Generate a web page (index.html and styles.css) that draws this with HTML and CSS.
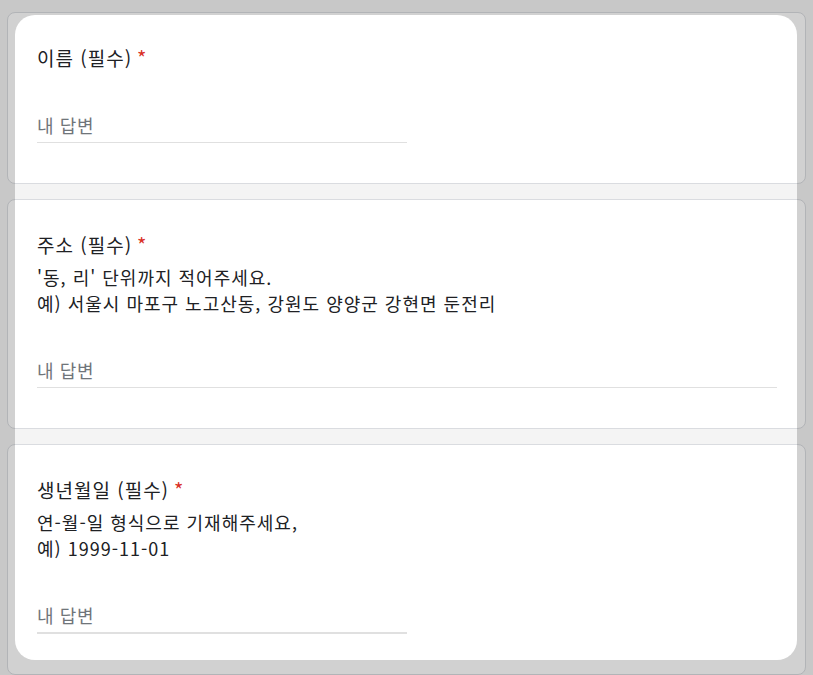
FILE: index.html
```html
<!DOCTYPE html>
<html lang="ko">
<head>
<meta charset="utf-8">
<link rel="stylesheet" href="styles.css">
</head>
<body>
<div class="page">
  <div class="card">
    <div class="title">이름 (필수)<span class="req">*</span></div>
    <div class="answer half"><span class="ph">내 답변</span></div>
  </div>
  <div class="card">
    <div class="title">주소 (필수)<span class="req">*</span></div>
    <div class="desc">'동, 리' 단위까지 적어주세요.<br>예) 서울시 마포구 노고산동, 강원도 양양군 강현면 둔전리</div>
    <div class="answer"><span class="ph">내 답변</span></div>
  </div>
  <div class="card">
    <div class="title">생년월일 (필수)<span class="req">*</span></div>
    <div class="desc">연-월-일 형식으로 기재해주세요,<br>예) 1999-11-01</div>
    <div class="answer half thick"><span class="ph">내 답변</span></div>
  </div>
</div>
<div class="spotlight"></div>
</body>
</html>
```

FILE: styles.css
```css
html, body {
  margin: 0;
  padding: 0;
  background: #f4f4f4;
  overflow: hidden;
  height: 675px;
}
body {
  font-family: "Noto Sans CJK KR", "Noto Sans", sans-serif;
  color: #202124;
}
.page {
  padding: 12px 0 0 7px;
  width: 799px;
}
.card {
  background: #fff;
  border: 1px solid #dadce0;
  border-radius: 8px;
  padding: 32px 28px 40px 29px;
  margin-bottom: 15px;
}
.title {
  font-size: 19px;
  line-height: 26px;
  letter-spacing: 1px;
}
.req {
  color: #d93025;
  margin-left: 5px;
  font-size: 20px;
}
.desc {
  margin-top: 6px;
  font-size: 18px;
  line-height: 26px;
  letter-spacing: 1px;
}
.answer {
  margin-top: 41px;
  padding-bottom: 4px;
  border-bottom: 1px solid #e0e0e0;
  font-size: 18px;
  line-height: 26px;
  letter-spacing: 0.6px;
}
.answer.half { width: 50%; }
.answer.thick { border-bottom-width: 2px; }
.ph { color: #70757a; }
.spotlight {
  position: absolute;
  left: 15px;
  top: 15px;
  width: 782px;
  height: 645px;
  border-radius: 20px;
  box-shadow: 0 0 0 2000px rgba(0, 0, 0, 0.18);
  pointer-events: none;
}
```
